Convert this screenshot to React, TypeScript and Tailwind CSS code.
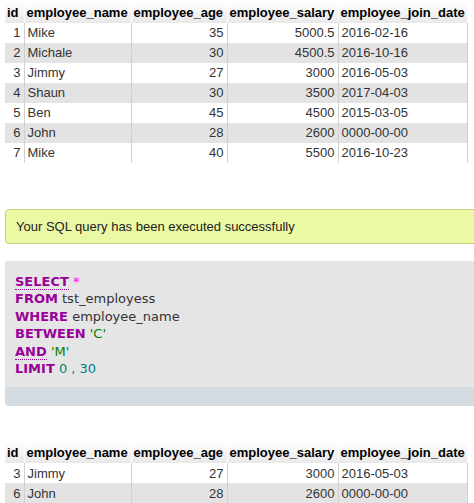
const cols = ["id", "employee_name", "employee_age", "employee_salary", "employee_join_date"]
const widths = ["w-[19px]", "w-[107px]", "w-[96px]", "w-[111px]", "w-[129px]"]

const rows1 = [
  [1, "Mike", 35, "5000.5", "2016-02-16"],
  [2, "Michale", 30, "4500.5", "2016-10-16"],
  [3, "Jimmy", 27, "3000", "2016-05-03"],
  [4, "Shaun", 30, "3500", "2017-04-03"],
  [5, "Ben", 45, "4500", "2015-03-05"],
  [6, "John", 28, "2600", "0000-00-00"],
  [7, "Mike", 40, "5500", "2016-10-23"],
]
const rows2 = [rows1[2], rows1[5]]

function DataTable({ rows }: { rows: (string | number)[][] }) {
  return (
    <table className="ml-[5px] border-collapse text-[13px] text-[#333]" style={{ fontFamily: "Arial, 'Liberation Sans', sans-serif" }}>
      <thead>
        <tr className="h-[21px]">
          {cols.map((c, i) => (
            <th key={c} className={`${widths[i]} px-[2px] text-left font-bold text-black bg-gradient-to-b from-white to-[#e8e8e8] border-r border-white`}>
              {c}
            </th>
          ))}
        </tr>
      </thead>
      <tbody>
        {rows.map((r, ri) => (
          <tr key={ri} className={`h-[20px] ${ri % 2 ? "bg-[#e3e3e3]" : "bg-white"}`}>
            {r.map((v, i) => (
              <td key={i} className={`px-[3px] border-r border-[#d0d0d0] ${i === 0 || i === 2 || i === 3 ? "text-right" : "text-left"}`}>
                {v}
              </td>
            ))}
          </tr>
        ))}
      </tbody>
    </table>
  )
}

export default function App() {
  const kw = "text-[#990099] font-bold"
  return (
    <div className="w-[474px] h-[503px] overflow-hidden bg-white">
      <div className="pt-[2px]">
        <DataTable rows={rows1} />
      </div>

      <div className="mt-[46px] ml-[5px] w-[480px] h-[35px] rounded-l-[4px] border border-[#c5d17a] bg-[#ebf8a4] flex items-center pl-[10px] text-[13px] text-[#222]" style={{ fontFamily: "Arial, 'Liberation Sans', sans-serif" }}>
        Your SQL query has been executed successfully
      </div>

      <div className="mt-[17px] ml-[5px] w-[480px] rounded-bl-[4px] bg-[#e5e5e5] overflow-hidden" style={{ fontFamily: "'DejaVu Sans', Verdana, sans-serif" }}>
        <div className="pt-[12px] pb-[10px] pl-[10px] text-[13px] leading-[17.4px] text-[#333]">
          <div><span className={`${kw} border-b border-dotted border-[#990099]`}>SELECT</span> <span className="text-[#ff00ff]">*</span></div>
          <div><span className={kw}>FROM</span> tst_employess</div>
          <div><span className={kw}>WHERE</span> employee_name</div>
          <div><span className={kw}>BETWEEN</span> <span className="text-[#008000]">'C'</span></div>
          <div><span className={`${kw} border-b border-dotted border-[#990099]`}>AND</span> <span className="text-[#008000]">'M'</span></div>
          <div><span className={kw}>LIMIT</span> <span className="text-[#008080]">0 , 30</span></div>
        </div>
        <div className="h-[19px] bg-[#d4dbe1]" />
      </div>

      <div className="mt-[36px]">
        <DataTable rows={rows2} />
      </div>
    </div>
  )
}
